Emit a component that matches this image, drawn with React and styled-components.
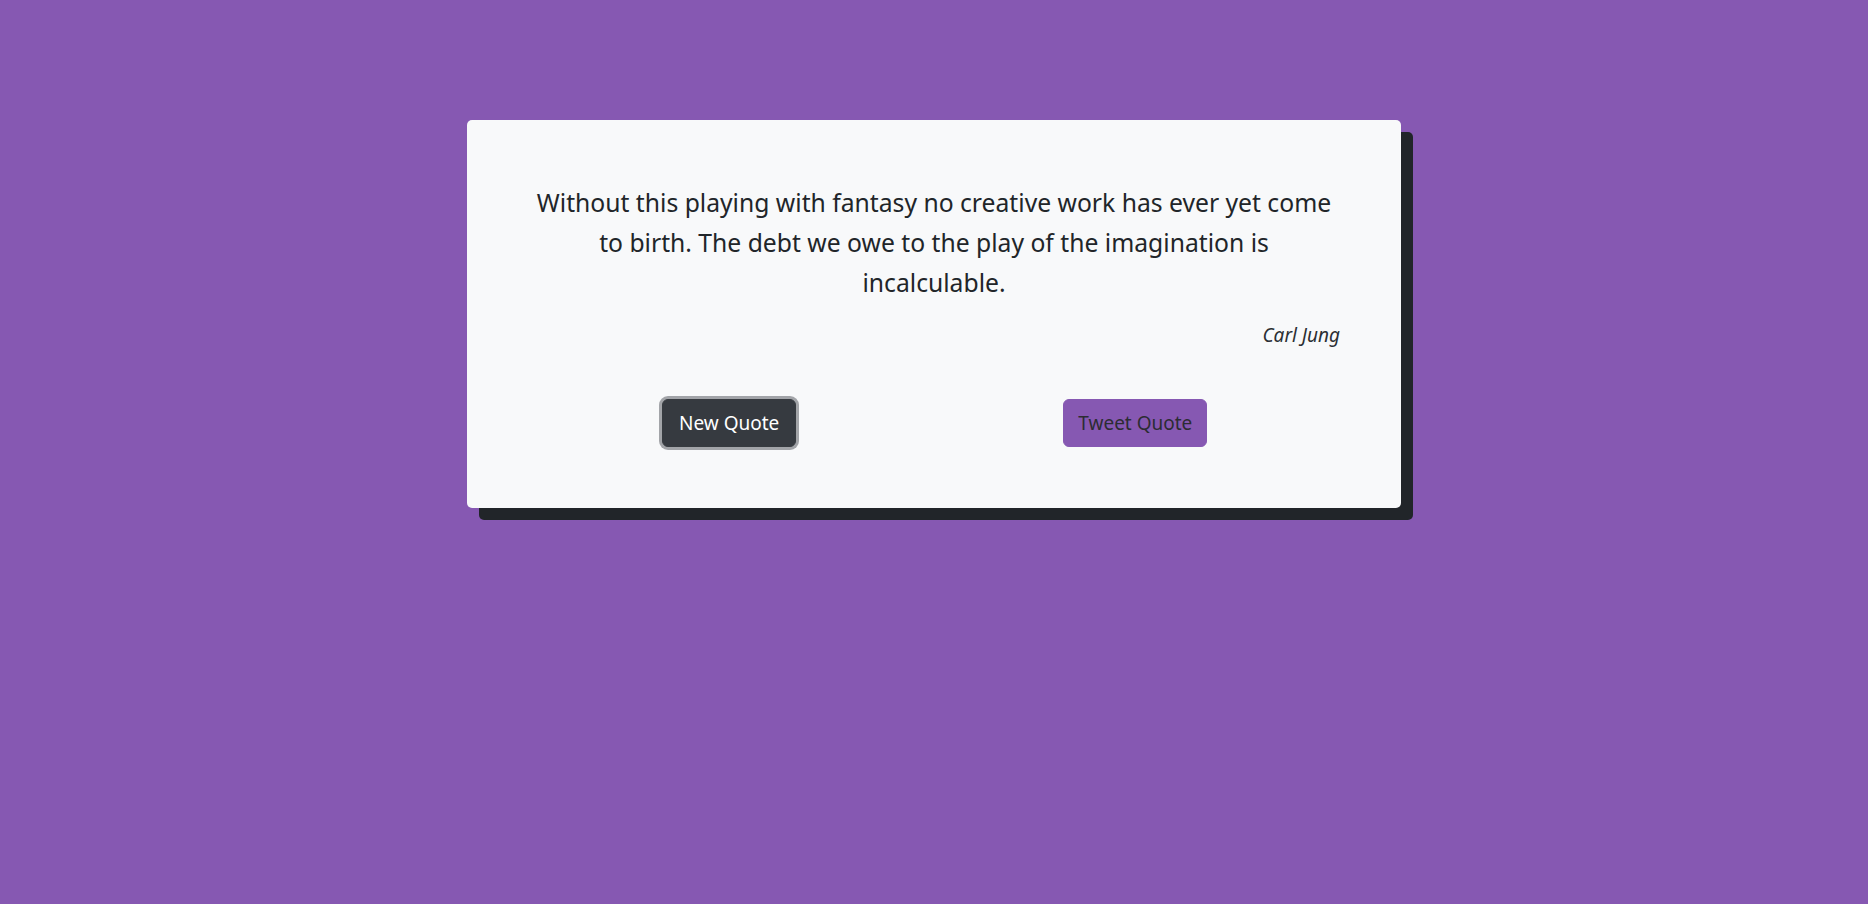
import React, { useState } from "react";
import styled, { createGlobalStyle } from "styled-components";

const GlobalStyle = createGlobalStyle`
  html, body {
    margin: 0;
    padding: 0;
    background-color: #8658b2;
    font-family: "Noto Sans", "Open Sans", sans-serif;
    color: #212529;
  }
`;

const Page = styled.div`
  min-height: 904px;
  padding-top: 120px;
  box-sizing: border-box;
`;

const Card = styled.div`
  width: 50%;
  margin: 0 auto;
  box-sizing: border-box;
  background-color: #f8f9fa;
  border-radius: 5px;
  box-shadow: 12px 12px 0 #212529;
  padding: 63px 61px 61px;
`;

const QuoteText = styled.p`
  margin: 0;
  text-align: center;
  font-size: 24.7px;
  line-height: 40px;
`;

const Author = styled.p`
  margin: 17px 0 0;
  text-align: right;
  font-style: italic;
  font-size: 19px;
  line-height: 30px;
  color: #2b2f33;
`;

const ButtonRow = styled.div`
  display: flex;
  align-items: center;
  gap: 267px;
  margin-top: 49px;
  padding-left: 134px;
`;

const Button = styled.button`
  font-family: inherit;
  font-size: 19px;
  line-height: 28px;
  padding: 9px ${(p) => (p.$dark ? "16px" : "14px")};
  border-radius: 6px;
  cursor: pointer;
  border: 1px solid ${(p) => (p.$dark ? "#373b40" : "#8658b2")};
  background-color: ${(p) => (p.$dark ? "#363a40" : "#8658b2")};
  color: ${(p) => (p.$dark ? "#ffffff" : "#2c2c33")};
  box-shadow: ${(p) => (p.$focused ? "0 0 0 3px #a2a4a8" : "none")};
`;

const quotes = [
  {
    text: "Without this playing with fantasy no creative work has ever yet come to birth. The debt we owe to the play of the imagination is incalculable.",
    author: "Carl Jung",
  },
];

export default function App() {
  const [index, setIndex] = useState(0);
  const quote = quotes[index];

  const nextQuote = () => {
    setIndex((index + 1) % quotes.length);
  };

  return (
    <>
      <GlobalStyle />
      <Page>
        <Card>
          <QuoteText>{quote.text}</QuoteText>
          <Author>{quote.author}</Author>
          <ButtonRow>
            <Button $dark $focused onClick={nextQuote}>
              New Quote
            </Button>
            <Button>Tweet Quote</Button>
          </ButtonRow>
        </Card>
      </Page>
    </>
  );
}
